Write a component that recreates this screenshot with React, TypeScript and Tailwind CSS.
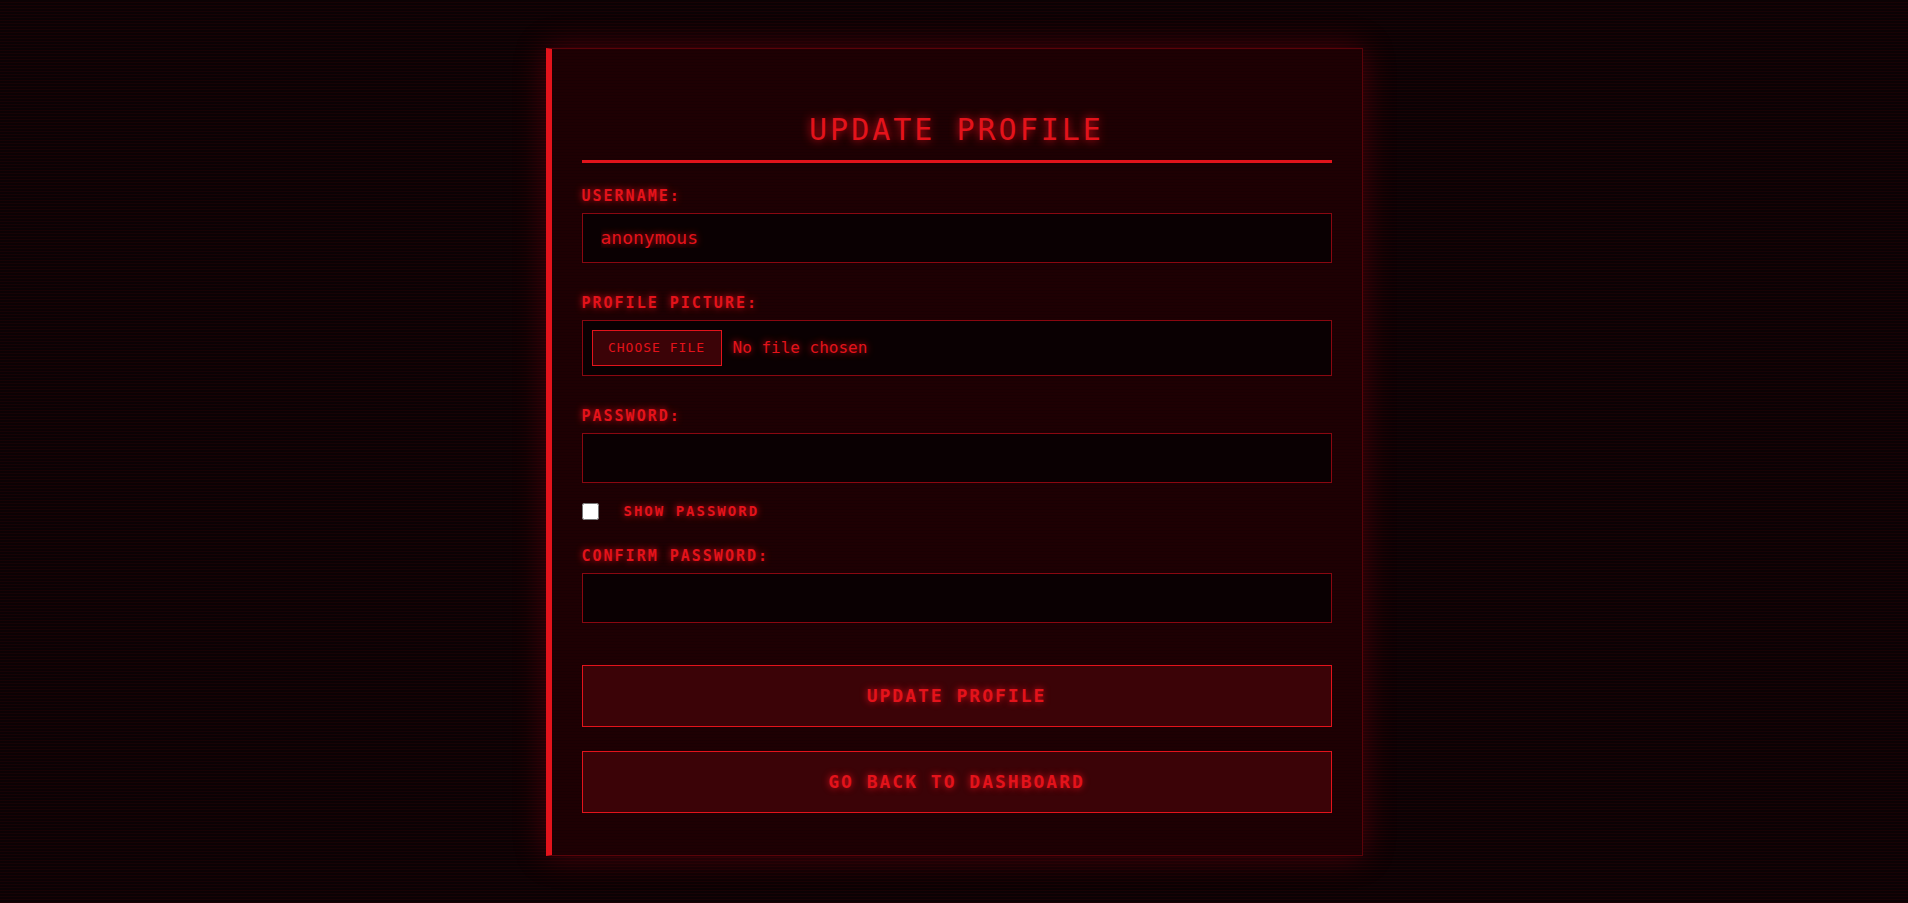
import { useState } from 'react'

const glow = '[text-shadow:0_0_7px_rgba(255,16,28,0.85)]'

function Field({ label, children }: { label: string; children: React.ReactNode }) {
  return (
    <div className="mb-[31px]">
      <label className={`block text-[15px] leading-[18px] font-bold tracking-[2px] text-[#e3131b] mb-[8px] ${glow}`}>
        {label}
      </label>
      {children}
    </div>
  )
}

export default function App() {
  const [show, setShow] = useState(false)
  const [username, setUsername] = useState('anonymous')

  return (
    <div
      className="min-h-screen w-full flex items-center justify-center bg-[#0b0204] bg-[repeating-linear-gradient(0deg,rgba(120,0,10,0.12)_0px,rgba(120,0,10,0.12)_1px,transparent_1px,transparent_3px)]"
      style={{ fontFamily: '"DejaVu Sans Mono", "Liberation Mono", monospace' }}
    >
      <div className="w-[817px] bg-[#1e0003] bg-[repeating-linear-gradient(0deg,rgba(0,0,0,0.12)_0px,rgba(0,0,0,0.12)_1px,transparent_1px,transparent_3px)] border border-[#5a0309] border-l-[6px] border-l-[#e3131b] shadow-[0_0_30px_rgba(220,0,20,0.28)] pl-[30px] pr-[30px] pt-[63px] pb-[42px]">
        {/* Title */}
        <div className="border-b-[3px] border-[#e3131b] pb-[12px] mb-[24px] text-center">
          <h1 className="text-[30px] leading-[36px] tracking-[3px] text-[#e3131b] [text-shadow:0_0_10px_rgba(255,16,28,0.9)]">
            UPDATE PROFILE
          </h1>
        </div>

        <Field label="USERNAME:">
          <input
            value={username}
            onChange={(e) => setUsername(e.target.value)}
            className={`block w-full h-[50px] bg-[#0a0002] border border-[#8a0710] px-[18px] text-[18px] text-[#e3131b] outline-none ${glow}`}
            style={{ fontFamily: 'inherit' }}
          />
        </Field>

        <Field label="PROFILE PICTURE:">
          <div className="flex items-center h-[56px] bg-[#0a0002] border border-[#8a0710] px-[9px]">
            <button className="h-[36px] w-[130px] bg-[#3b0307] border border-[#e3131b] text-[13px] tracking-[1px] text-[#e3131b]" style={{ fontFamily: 'inherit' }}>
              CHOOSE FILE
            </button>
            <span className={`ml-[11px] text-[16px] text-[#e3131b] ${glow}`}>No file chosen</span>
          </div>
        </Field>

        <div>
          <label className={`block text-[15px] leading-[18px] font-bold tracking-[2px] text-[#e3131b] mb-[8px] ${glow}`}>
            PASSWORD:
          </label>
          <input
            type={show ? 'text' : 'password'}
            className="block w-full h-[50px] bg-[#0a0002] border border-[#8a0710] px-[18px] text-[18px] text-[#e3131b] outline-none"
          />
        </div>

        <div className="flex items-center h-[20px] mt-[19px] mb-[25px]">
          <input
            type="checkbox"
            checked={show}
            onChange={() => setShow(!show)}
            className="w-[17px] h-[17px] m-0"
          />
          <span className={`ml-[25px] text-[14px] font-bold tracking-[2px] text-[#e3131b] ${glow}`}>SHOW PASSWORD</span>
        </div>

        <div className="mb-[42px]">
          <label className={`block text-[15px] leading-[18px] font-bold tracking-[2px] text-[#e3131b] mb-[8px] ${glow}`}>
            CONFIRM PASSWORD:
          </label>
          <input
            type={show ? 'text' : 'password'}
            className="block w-full h-[50px] bg-[#0a0002] border border-[#8a0710] px-[18px] text-[18px] text-[#e3131b] outline-none"
          />
        </div>

        <button className={`block w-full h-[62px] bg-[#3b0307] border border-[#e3131b] text-[18px] font-bold tracking-[2px] text-[#e3131b] ${glow}`} style={{ fontFamily: 'inherit' }}>
          UPDATE PROFILE
        </button>
        <button className={`block w-full h-[62px] mt-[24px] bg-[#3b0307] border border-[#e3131b] text-[18px] font-bold tracking-[2px] text-[#e3131b] ${glow}`} style={{ fontFamily: 'inherit' }}>
          GO BACK TO DASHBOARD
        </button>
      </div>
    </div>
  )
}
